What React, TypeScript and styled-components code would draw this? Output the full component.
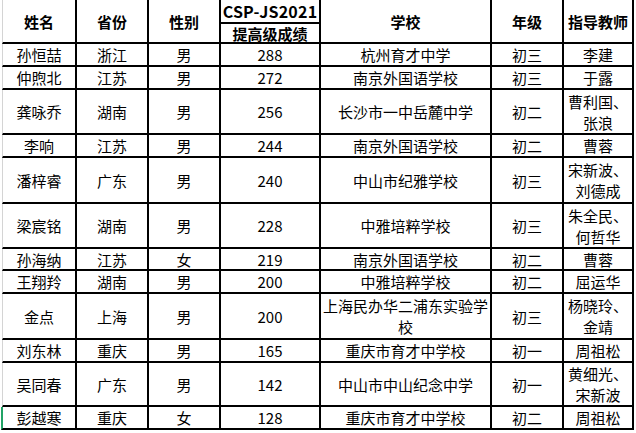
import styled, { createGlobalStyle } from 'styled-components'

const GlobalStyle = createGlobalStyle`
  html, body {
    margin: 0;
    padding: 0;
    background: #ffffff;
  }
  body {
    width: 636px;
    height: 433px;
    overflow: hidden;
    font-family: 'Noto Sans CJK SC', 'Noto Sans', sans-serif;
    color: #000000;
  }
`

const COLUMNS = '77px 72px 72px 100px 171px 72px 70px'

const Sheet = styled.div`
  display: flex;
  flex-direction: column;
  width: 634px;
`

const HeaderRow = styled.div`
  display: grid;
  grid-template-columns: ${COLUMNS};
  grid-template-rows: 24px 20px;
`

const Row = styled.div<{ $h: number }>`
  display: grid;
  grid-template-columns: ${COLUMNS};
  height: ${props => props.$h}px;
`

const Cell = styled.div`
  display: flex;
  align-items: center;
  justify-content: center;
  box-sizing: border-box;
  border-right: 2px solid #000000;
  border-bottom: 2px solid #000000;
  text-align: center;
  font-size: 15px;
  line-height: 21px;
  padding: 0 1px;
  overflow: hidden;
`

const FirstCell = styled(Cell)<{ $selected?: boolean }>`
  margin-left: ${props => (props.$selected ? '1px' : '2px')};
  border-left: ${props =>
    props.$selected ? '2px solid #21a366' : '1px solid #d4d4d4'};
`

const HeadCell = styled(Cell)<{ $span?: boolean }>`
  font-weight: bold;
  grid-row: ${props => (props.$span ? '1 / 3' : 'auto')};
`

const HeadFirst = styled(FirstCell)`
  font-weight: bold;
  grid-row: 1 / 3;
`

const ScoreTitle = styled(HeadCell)`
  font-size: 16px;
  line-height: 20px;
  letter-spacing: 0.2px;
`

const ROWS = [
  { name: '孙恒喆', prov: '浙江', sex: '男', score: 288, school: '杭州育才中学', grade: '初三', teacher: '李建', h: 23 },
  { name: '仲煦北', prov: '江苏', sex: '男', score: 272, school: '南京外国语学校', grade: '初三', teacher: '于露', h: 23 },
  { name: '龚咏乔', prov: '湖南', sex: '男', score: 256, school: '长沙市一中岳麓中学', grade: '初二', teacher: '曹利国、张浪', h: 45 },
  { name: '李响', prov: '江苏', sex: '男', score: 244, school: '南京外国语学校', grade: '初二', teacher: '曹蓉', h: 23 },
  { name: '潘梓睿', prov: '广东', sex: '男', score: 240, school: '中山市纪雅学校', grade: '初三', teacher: '宋新波、刘德成', h: 46 },
  { name: '梁宸铭', prov: '湖南', sex: '男', score: 228, school: '中雅培粹学校', grade: '初三', teacher: '朱全民、何哲华', h: 45 },
  { name: '孙海纳', prov: '江苏', sex: '女', score: 219, school: '南京外国语学校', grade: '初二', teacher: '曹蓉', h: 22 },
  { name: '王翔羚', prov: '湖南', sex: '男', score: 200, school: '中雅培粹学校', grade: '初二', teacher: '屈运华', h: 23 },
  { name: '金点', prov: '上海', sex: '男', score: 200, school: '上海民办华二浦东实验学校', grade: '初三', teacher: '杨晓玲、金靖', h: 46 },
  { name: '刘东林', prov: '重庆', sex: '男', score: 165, school: '重庆市育才中学校', grade: '初一', teacher: '周祖松', h: 23 },
  { name: '吴同春', prov: '广东', sex: '男', score: 142, school: '中山市中山纪念中学', grade: '初一', teacher: '黄细光、宋新波', h: 44 },
  { name: '彭越寒', prov: '重庆', sex: '女', score: 128, school: '重庆市育才中学校', grade: '初二', teacher: '周祖松', h: 23 },
]

const App = () => {
  return (
    <>
      <GlobalStyle />
      <Sheet>
        <HeaderRow>
          <HeadFirst>姓名</HeadFirst>
          <HeadCell $span>省份</HeadCell>
          <HeadCell $span>性别</HeadCell>
          <ScoreTitle>CSP-JS2021</ScoreTitle>
          <HeadCell $span>学校</HeadCell>
          <HeadCell $span>年级</HeadCell>
          <HeadCell $span>指导教师</HeadCell>
          <HeadCell style={{ gridColumn: 4, gridRow: 2 }}>提高级成绩</HeadCell>
        </HeaderRow>
        {ROWS.map((el, i) => (
          <Row key={el.name} $h={el.h}>
            <FirstCell $selected={i === ROWS.length - 1}>{el.name}</FirstCell>
            <Cell>{el.prov}</Cell>
            <Cell>{el.sex}</Cell>
            <Cell>{el.score}</Cell>
            <Cell>{el.school}</Cell>
            <Cell>{el.grade}</Cell>
            <Cell>{el.teacher}</Cell>
          </Row>
        ))}
      </Sheet>
    </>
  )
}

export default App
